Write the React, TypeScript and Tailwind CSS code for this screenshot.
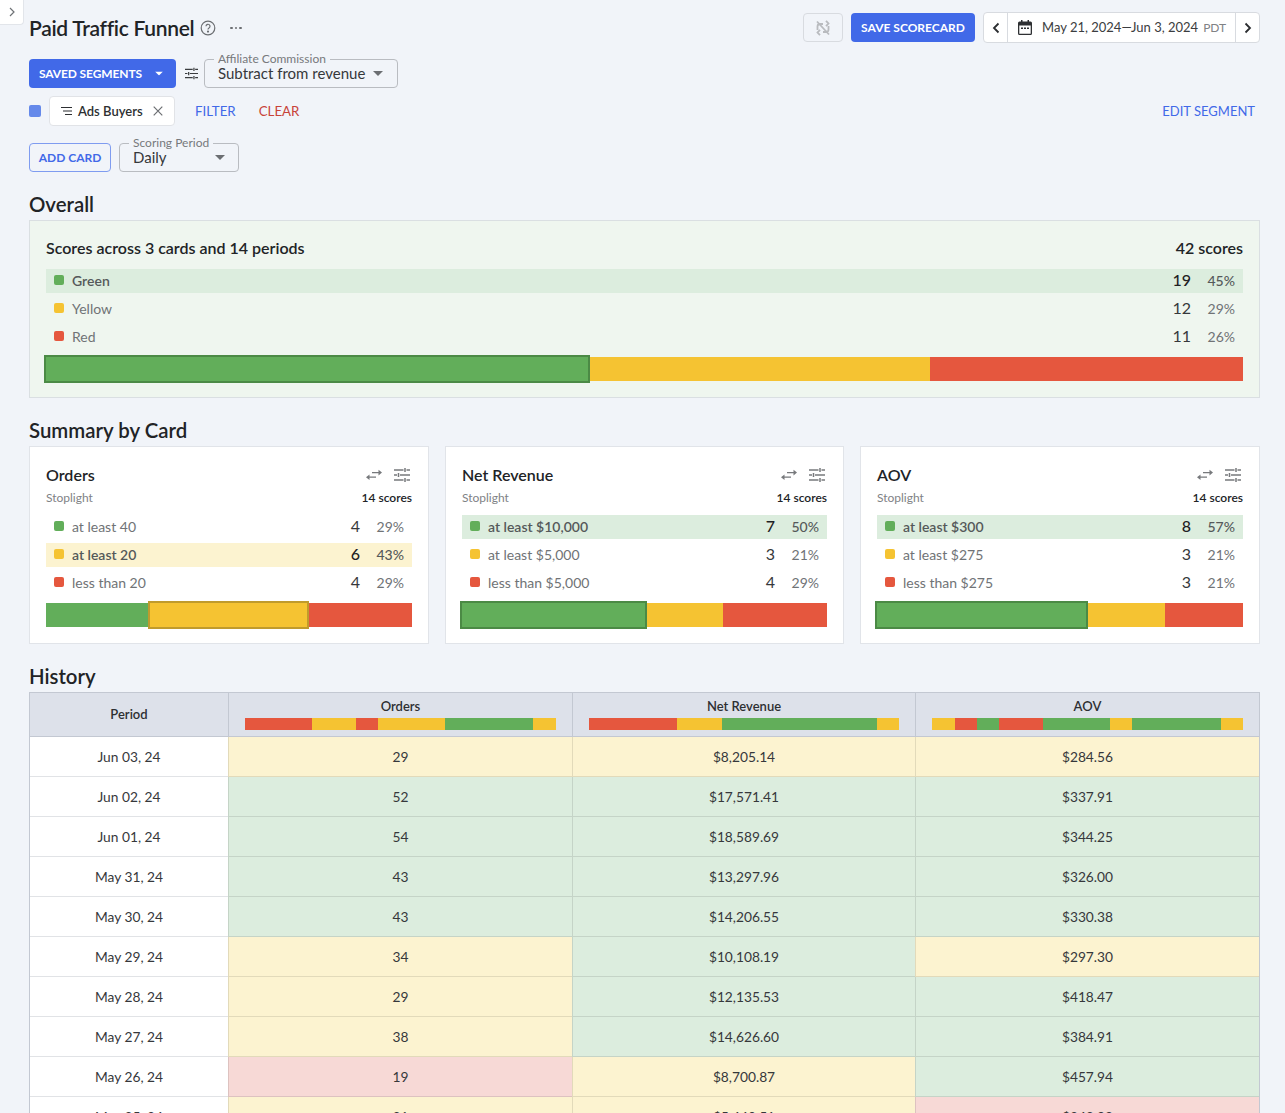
const cellBg: Record<string, string> = { g: "bg-[#dcedde]", y: "bg-[#fcf3d0]", r: "bg-[#f7d9d6]" };
const barColor: Record<string, string> = { g: "bg-[#62ae5a]", y: "bg-[#f5c332]", r: "bg-[#e5573e]" };

function Caret({ className = "" }: { className?: string }) {
  return (
    <svg width="10" height="5" viewBox="0 0 10 5" className={className}>
      <path d="M0 0h10L5 5z" fill="currentColor" />
    </svg>
  );
}

function Sliders({ className = "", size = 16 }: { className?: string; size?: number }) {
  return (
    <svg width={size} height={size} viewBox="0 0 16 16" className={className} fill="none" stroke="currentColor" strokeWidth="1.5">
      <path d="M0 3h9.500M12.500 3H16M11 1v4M0 8h3M6 8h10M4.500 6v4M0 13h9.500M12.500 13H16M11 11v4" />
    </svg>
  );
}

function Swap() {
  return (
    <svg width="16" height="12" viewBox="0 0 16 12" fill="currentColor">
      <path d="M6 3h6.500V.8L16 3.600l-3.500 2.800V4.200H6zM10 8.800H3.500V11L0 8.200l3.500-2.800v2.200H10z" />
    </svg>
  );
}

function Chevron({ dir }: { dir: "l" | "r" }) {
  return (
    <svg width="8" height="12" viewBox="0 0 8 12" fill="none" stroke="#2b2d30" strokeWidth="1.8">
      <path d={dir === "l" ? "M6.500 1.500 2 6l4.500 4.500" : "M1.500 1.500 6 6l-4.500 4.500"} />
    </svg>
  );
}

function Dot({ c }: { c: string }) {
  return <span className={`h-[10px] w-[10px] shrink-0 rounded-[2px] ${barColor[c]}`} />;
}

type Row = { c: string; label: string; n: number; pct: string };

function StatRow({ row, active }: { row: Row; active: boolean }) {
  return (
    <div className={`flex h-6 items-center px-2 pb-[2px] text-[14px] ${active ? `${cellBg[row.c]} font-semibold text-[#55595a]` : "text-[#707376]"}`}>
      <Dot c={row.c} />
      <span className="ml-2">{row.label}</span>
      <span className={`ml-auto text-right text-[16px] leading-none ${active ? "font-medium text-[#1f2124]" : "text-[#36383b]"}`}>{row.n}</span>
      <span className={`w-[44px] text-right ${active ? "font-medium" : ""}`}>{row.pct}</span>
    </div>
  );
}

function StackBar({ parts, active }: { parts: { c: string; w: number }[]; active: number }) {
  return (
    <div className="flex h-6 w-full">
      {parts.map((p, i) => (
        <div key={i} className={`relative h-full ${barColor[p.c]}`} style={{ width: p.w }}>
          {i === active && (
            <div
              className={`absolute -inset-y-[2px] -left-[2px] right-0 border-2 ${p.c === "g" ? "border-[#4b8a45] bg-[#62ae5a]" : "border-[#c09b2c] bg-[#f5c332]"}`}
            />
          )}
        </div>
      ))}
    </div>
  );
}

const cards = [
  {
    title: "Orders",
    width: "w-[400px]",
    rows: [
      { c: "g", label: "at least 40", n: 4, pct: "29%" },
      { c: "y", label: "at least 20", n: 6, pct: "43%" },
      { c: "r", label: "less than 20", n: 4, pct: "29%" },
    ],
    active: 1,
    parts: [
      { c: "g", w: 104 },
      { c: "y", w: 159 },
      { c: "r", w: 103 },
    ],
  },
  {
    title: "Net Revenue",
    width: "w-[399px]",
    rows: [
      { c: "g", label: "at least $10,000", n: 7, pct: "50%" },
      { c: "y", label: "at least $5,000", n: 3, pct: "21%" },
      { c: "r", label: "less than $5,000", n: 4, pct: "29%" },
    ],
    active: 0,
    parts: [
      { c: "g", w: 185 },
      { c: "y", w: 76 },
      { c: "r", w: 104 },
    ],
  },
  {
    title: "AOV",
    width: "w-[400px]",
    rows: [
      { c: "g", label: "at least $300", n: 8, pct: "57%" },
      { c: "y", label: "at least $275", n: 3, pct: "21%" },
      { c: "r", label: "less than $275", n: 3, pct: "21%" },
    ],
    active: 0,
    parts: [
      { c: "g", w: 211 },
      { c: "y", w: 77 },
      { c: "r", w: 78 },
    ],
  },
];

const history = [
  ["Jun 03, 24", "29", "y", "$8,205.14", "y", "$284.56", "y"],
  ["Jun 02, 24", "52", "g", "$17,571.41", "g", "$337.91", "g"],
  ["Jun 01, 24", "54", "g", "$18,589.69", "g", "$344.25", "g"],
  ["May 31, 24", "43", "g", "$13,297.96", "g", "$326.00", "g"],
  ["May 30, 24", "43", "g", "$14,206.55", "g", "$330.38", "g"],
  ["May 29, 24", "34", "y", "$10,108.19", "g", "$297.30", "y"],
  ["May 28, 24", "29", "y", "$12,135.53", "g", "$418.47", "g"],
  ["May 27, 24", "38", "y", "$14,626.60", "g", "$384.91", "g"],
  ["May 26, 24", "19", "r", "$8,700.87", "y", "$457.94", "g"],
  ["May 25, 24", "31", "y", "$5,440.51", "y", "$243.98", "r"],
];

const headBars: { title: string; parts: [string, number][] }[] = [
  { title: "Orders", parts: [["r", 67], ["y", 44], ["r", 22], ["y", 67], ["g", 88], ["y", 23]] },
  { title: "Net Revenue", parts: [["r", 88], ["y", 45], ["g", 155], ["y", 22]] },
  { title: "AOV", parts: [["y", 23], ["r", 22], ["g", 22], ["r", 44], ["g", 67], ["y", 22], ["g", 89], ["y", 22]] },
];

function Heading({ children, className = "" }: { children: string; className?: string }) {
  return <h2 className={`text-[20.400px] font-semibold leading-6 text-[#212326] ${className}`}>{children}</h2>;
}

function Select({ label, value, className, caretCls }: { label: string; value: string; className: string; caretCls: string }) {
  return (
    <div className={`relative flex h-[29px] items-center rounded-[4px] border border-[#b9bcc1] pl-[13px] text-[15px] leading-none text-[#36383b] ${className}`}>
      <span className="absolute -top-[7px] left-[9px] bg-[#f1f4f9] px-[4px] text-[12px] leading-[12px] text-[#77797c]">{label}</span>
      <span className="mb-[2px] mt-[2px] whitespace-nowrap pb-[1px]">{value}</span>
      <Caret className={`${caretCls} text-[#6b6e72]`} />
    </div>
  );
}

export default function App() {
  return (
    <div className="relative h-[1113px] overflow-hidden bg-[#f1f4f9] pl-[29px] pr-[25px] font-['Lato','Open_Sans',sans-serif] text-[#212326]">
      <div className="absolute left-0 top-0 flex h-[25px] w-[24px] items-center justify-center rounded-br-[4px] border-b border-r border-[#e2e5ea] bg-white">
        <svg width="6" height="10" viewBox="0 0 6 10" fill="none" stroke="#6f7276" strokeWidth="1.2">
          <path d="m1 1 4 4-4 4" />
        </svg>
      </div>

      {/* top bar */}
      <div className="flex items-start justify-between pt-[13px]">
        <div className="flex h-[30px] items-center">
          <h1 className="text-[21px] font-semibold leading-[30px] tracking-[-0.3px]">Paid Traffic Funnel</h1>
          <svg width="16" height="16" viewBox="0 0 16 16" fill="none" stroke="#6b6e72" strokeWidth="1.2" className="ml-[6px]">
            <circle cx="8" cy="8" r="6.800" />
            <path d="M6 6.300a2 2 0 1 1 3 1.700c-.7.4-1 .8-1 1.500" />
            <circle cx="8" cy="11.600" r=".5" fill="#6b6e72" />
          </svg>
          <span className="ml-[14px] flex gap-[2px]">
            <i className="h-[2.500px] w-[2.500px] rounded-full bg-[#6b6e72]" />
            <i className="h-[2.500px] w-[2.500px] rounded-full bg-[#6b6e72]" />
            <i className="h-[2.500px] w-[2.500px] rounded-full bg-[#6b6e72]" />
          </span>
        </div>
        <div className="-mt-[1px] flex items-center">
          <div className="flex h-[29px] w-10 items-center justify-center rounded-[4px] border border-[#d8dbe0]">
            <svg width="16" height="16" viewBox="0 0 16 16" fill="none" stroke="#b9bbbf" strokeWidth="1.8">
              <path d="M2 1.500 14 14.500M2.500 10V6.500C2.500 5 3.500 4 5 4h3M11 .8 13.500 3.500 11 6.200M13.500 6v3.500c0 1.500-1 2.500-2.500 2.500H8M5 9.800 2.500 12.500 5 15.200" />
            </svg>
          </div>
          <div className="ml-2 flex h-[29px] w-[124px] items-center justify-center rounded-[4px] bg-[#4169e8] text-[12px] font-bold text-white">SAVE SCORECARD</div>
          <div className="ml-2 flex h-[31px] w-[277px] items-stretch overflow-hidden rounded-[4px] border border-[#d8dbe0] bg-white">
            <div className="flex w-6 items-center justify-center border-r border-[#d8dbe0]">
              <Chevron dir="l" />
            </div>
            <div className="flex flex-1 items-center whitespace-nowrap pl-[10px] text-[13px] text-[#3b3d40]">
              <svg width="14" height="15" viewBox="0 0 14 15" fill="#2e3033" className="shrink-0">
                <path d="M3 0h1.500v1.500h5V0H11v1.500h1.500A1.500 1.500 0 0 1 14 3v10.500a1.500 1.500 0 0 1-1.500 1.500h-11A1.500 1.500 0 0 1 0 13.500V3a1.500 1.500 0 0 1 1.500-1.500H3zM1.300 5.500v8.200h11.400V5.500z" />
                <path d="M3 7.500h2V9H3zM6 7.500h2V9H6zM9 7.500h2V9H9z" />
              </svg>
              <span className="ml-[10px]">May 21, 2024—Jun 3, 2024</span>
              <span className="ml-[5px] text-[12px] text-[#808285]">PDT</span>
            </div>
            <div className="flex w-6 items-center justify-center border-l border-[#d8dbe0]">
              <Chevron dir="r" />
            </div>
          </div>
        </div>
      </div>

      {/* segments */}
      <div className="mt-[16px] flex items-center">
        <div className="flex h-[29px] w-[147px] items-center rounded-[4px] bg-[#4169e8] pl-[10px] text-[12px] font-bold tracking-[-0.12px] text-white">
          SAVED SEGMENTS
          <Caret className="ml-[12px] scale-[0.8]" />
        </div>
        <Sliders size={13} className="ml-[9px] text-[#3a3c3f]" />
        <Select label="Affiliate Commission" value="Subtract from revenue" className="ml-[6px] w-[194px]" caretCls="ml-[8px]" />
      </div>

      <div className="mt-[8px] flex h-[30px] items-center">
        <span className="h-3 w-3 rounded-[2px] bg-[#6589ea]" />
        <div className="ml-2 flex h-[30px] w-[126px] items-center rounded-[4px] border border-[#e1e3e7] bg-white pl-[10px] text-[13px] font-semibold text-[#2d2f32]">
          <svg width="13" height="10" viewBox="0 0 13 10" fill="none" stroke="#2d2f32" strokeWidth="1.1">
            <path d="M1 1.500h11M3 5h9M5 8.500h7" />
          </svg>
          <span className="ml-[5px] mt-[1px]">Ads Buyers</span>
          <svg width="10" height="10" viewBox="0 0 10 10" fill="none" stroke="#6b6e72" strokeWidth="1.200" className="ml-[10px]">
            <path d="m.7.700 8.600 8.600M9.300.700.7 9.300" />
          </svg>
        </div>
        <span className="ml-[20px] mt-[2px] text-[13.300px] text-[#4169e8]">FILTER</span>
        <span className="ml-[23px] mt-[2px] text-[13.300px] text-[#c8433a]">CLEAR</span>
        <span className="ml-auto mr-[5px] mt-[2px] text-[13px] text-[#4169e8]">EDIT SEGMENT</span>
      </div>

      <div className="mt-[17px] flex items-center">
        <div className="flex h-[29px] w-[82px] items-center justify-center rounded-[4px] border border-[#7f9cf0] text-[12px] font-bold text-[#4169e8]">ADD CARD</div>
        <Select label="Scoring Period" value="Daily" className="ml-2 w-[120px]" caretCls="ml-auto mr-[13px]" />
      </div>

      {/* overall */}
      <Heading className="mt-[20px]">Overall</Heading>
      <div className="mt-[4px] h-[178px] border border-[#dadfe2] bg-[#eff6ef] px-4 pt-[15px]">
        <div className="flex items-center justify-between text-[16px] font-semibold leading-6 text-[#212326]">
          <span>Scores across 3 cards and 14 periods</span>
          <span>42 scores</span>
        </div>
        <div className="mt-[9px] flex flex-col gap-1">
          <StatRow row={{ c: "g", label: "Green", n: 19, pct: "45%" }} active />
          <StatRow row={{ c: "y", label: "Yellow", n: 12, pct: "29%" }} active={false} />
          <StatRow row={{ c: "r", label: "Red", n: 11, pct: "26%" }} active={false} />
        </div>
        <div className="mt-2">
          <StackBar parts={[{ c: "g", w: 544 }, { c: "y", w: 341 }, { c: "r", w: 313 }]} active={0} />
        </div>
      </div>

      {/* summary */}
      <Heading className="mt-[20px]">Summary by Card</Heading>
      <div className="mt-[4px] flex gap-4">
        {cards.map((card) => (
          <div key={card.title} className={`h-[198px] border border-[#e1e4e9] bg-white px-4 pt-[16px] ${card.width}`}>
            <div className="flex items-center justify-between">
              <span className="text-[16px] font-semibold leading-6">{card.title}</span>
              <span className="flex items-center gap-[12px] text-[#77797c]">
                <Swap />
                <Sliders className="mr-[2px]" />
              </span>
            </div>
            <div className="flex items-center justify-between text-[12px] leading-[21px]">
              <span className="text-[#808285]">Stoplight</span>
              <span className="font-semibold text-[#212326]">14 scores</span>
            </div>
            <div className="mt-[7px] flex flex-col gap-1">
              {card.rows.map((r, i) => (
                <StatRow key={r.label} row={r} active={i === card.active} />
              ))}
            </div>
            <div className="mt-2">
              <StackBar parts={card.parts} active={card.active} />
            </div>
          </div>
        ))}
      </div>

      {/* history */}
      <Heading className="mt-[20px]">History</Heading>
      <div className="mt-[4px] border-x border-[#c3c8d2]">
        <div className="grid h-[45px] grid-cols-[198px_344px_343px_1fr] border-y border-[#c3c8d2] bg-[#dde1ea]">
          <div className="flex items-center justify-center text-[13px] font-semibold text-[#2d2f32]">Period</div>
          {headBars.map((h) => (
            <div key={h.title} className="flex flex-col items-center border-l border-[#c3c8d2] pt-[4px]">
              <span className="text-[13px] font-semibold leading-[18px] text-[#2d2f32]">{h.title}</span>
              <div className="mt-[3px] flex h-3">
                {h.parts.map(([c, w], i) => (
                  <div key={i} className={barColor[c]} style={{ width: w }} />
                ))}
              </div>
            </div>
          ))}
        </div>
        {history.map((row) => (
          <div key={row[0]} className="grid h-10 grid-cols-[198px_344px_343px_1fr] text-[13.750px] text-[#36383b]">
            <div className="flex items-center justify-center border-b border-[#e1e3e6] bg-white pt-[1px]">{row[0]}</div>
            <div className={`flex items-center justify-center border-b border-l border-black/10 pt-[1px] ${cellBg[row[2]]}`}>{row[1]}</div>
            <div className={`flex items-center justify-center border-b border-l border-black/10 pt-[1px] ${cellBg[row[4]]}`}>{row[3]}</div>
            <div className={`flex items-center justify-center border-b border-l border-black/10 pt-[1px] ${cellBg[row[6]]}`}>{row[5]}</div>
          </div>
        ))}
      </div>
    </div>
  );
}
